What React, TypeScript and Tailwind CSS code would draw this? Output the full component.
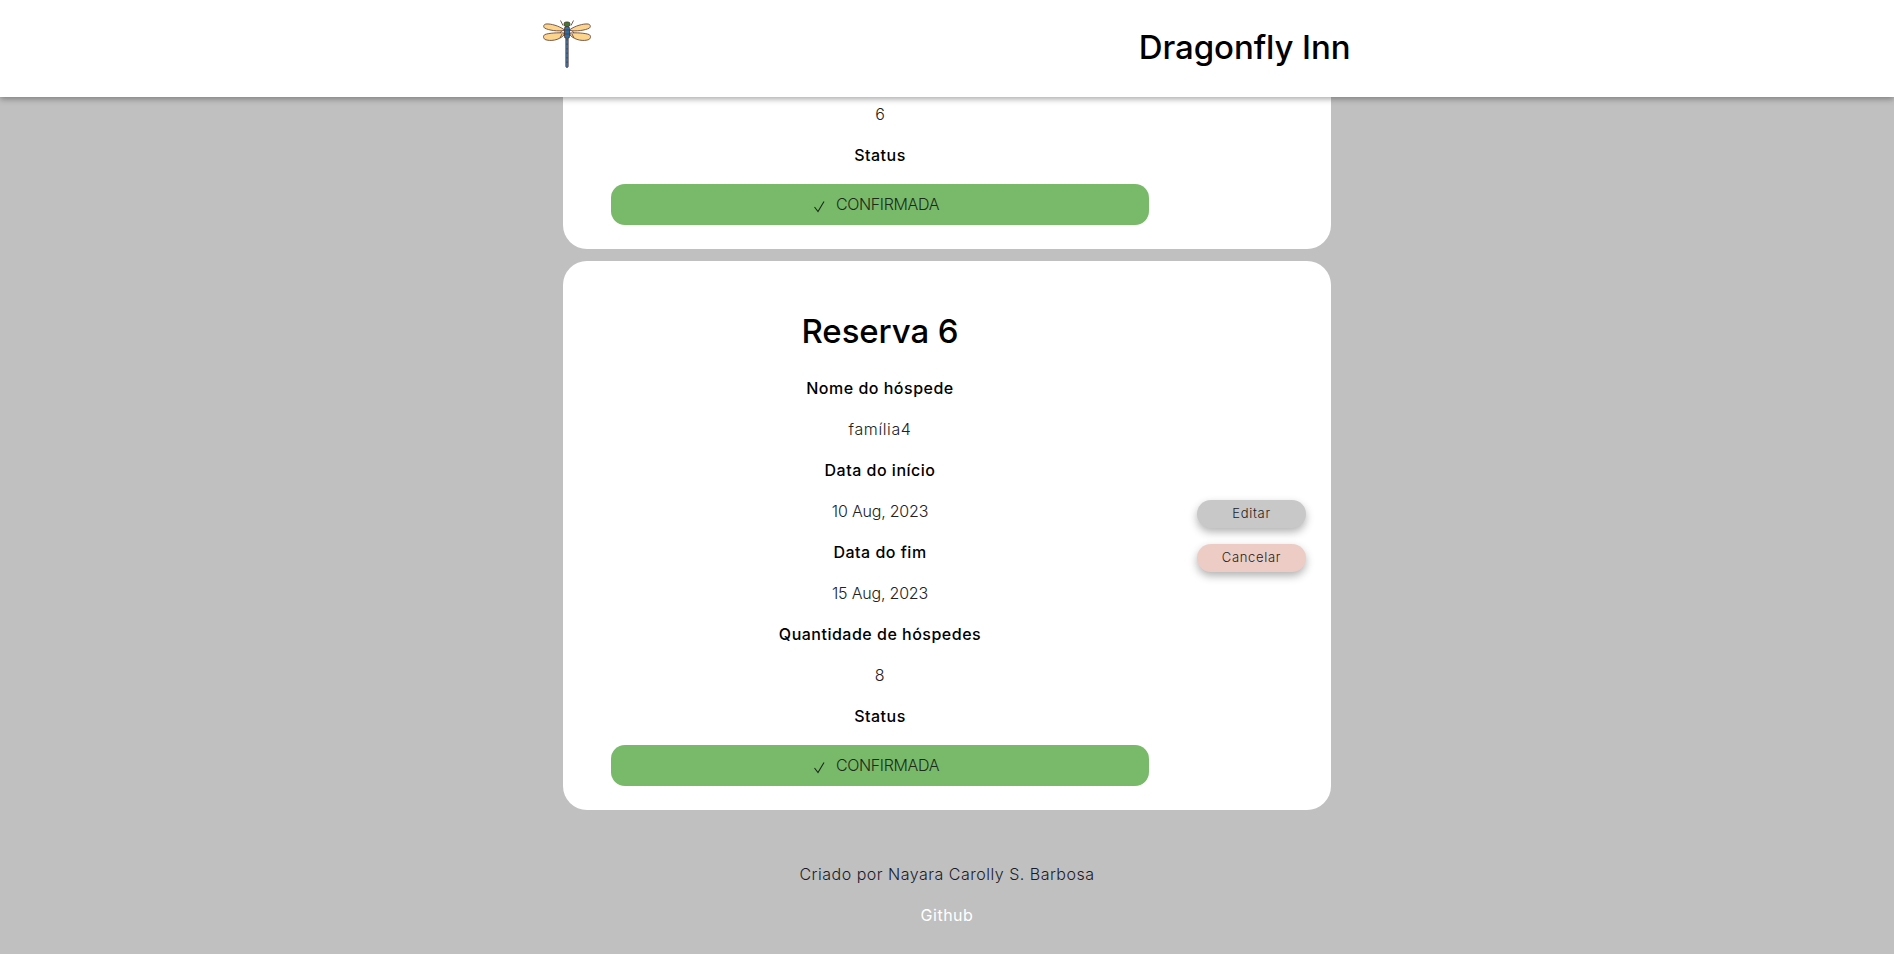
const font = { fontFamily: "Inter, sans-serif" };

const Dragonfly = () => (
  <svg width="48" height="48" viewBox="0 0 48 48" className="-ml-px">
    <g fill="#fdd48c" stroke="#6a4a3c" strokeWidth="0.9">
      <path d="M21 9.500C16 6 8 3.500 3 4C0.500 4.500 0 6.500 1.500 8C6 10.500 15 11.500 21 10.500Z" />
      <path d="M27 9.500C32 6 40 3.500 45 4C47.500 4.500 48 6.500 46.500 8C42 10.500 33 11.500 27 10.500Z" />
      <path d="M21 13C15 12.500 6 13 2 14.500C0 15.500 0 18 2 19.500C7 21.500 16 20.500 21 15Z" />
      <path d="M27 13C33 12.500 42 13 46 14.500C48 15.500 48 18 46 19.500C41 21.500 32 20.500 27 15Z" />
    </g>
    <path d="M17.500 0.500L20 5.500M30.500 0.500L28 5.500M19 10.500L17 13M29 10.500L31 13M19 14L17 18M29 14L31 18" stroke="#6a4a3c" strokeWidth="0.9" fill="none" />
    <rect x="21" y="2" width="6" height="4.500" rx="2" fill="#3f7a2c" stroke="#4e342e" strokeWidth="0.8" />
    <rect x="21.500" y="6.500" width="5" height="12" rx="2" fill="#2f6ea5" stroke="#4e342e" strokeWidth="0.9" />
    <path d="M21.500 10H26.500M21.500 14H26.500" stroke="#4e342e" strokeWidth="0.7" />
    <rect x="22.800" y="18" width="2.400" height="29.500" rx="1.200" fill="#3a78ad" stroke="#5d4037" strokeWidth="0.8" />
    <path d="M24 19V46" stroke="#3b3b4a" strokeWidth="0.8" strokeDasharray="1.500 3" />
  </svg>
);

const Check = () => (
  <svg width="13" height="13" viewBox="0 0 13 13" fill="none" stroke="#1a2a1a" strokeWidth="1.100" className="mt-1">
    <path d="M1.500 7L5 11.500L11 1.500" />
  </svg>
);

const StatusBar = () => (
  <div className="flex h-[41px] w-full items-center justify-center gap-[10px] rounded-[14px] bg-[#78b96a] pr-[8px] pb-px text-[16px] font-light tracking-[-0.35px] text-[#1c2b1a]">
    <Check />
    <span>CONFIRMADA</span>
  </div>
);

const Label = ({ children }: { children: string }) => (
  <p className="h-[41px] text-[16px] leading-[41px] font-medium tracking-[0.5px] text-black">{children}</p>
);

const Value = ({ children, date }: { children: string; date?: boolean }) => (
  <p className={date ? "h-[41px] text-[16px] leading-[41px] font-light tracking-[-0.2px] text-[#222]" : "h-[41px] text-[16px] leading-[41px] font-light tracking-[0.6px] text-[#222]"}>
    {children}
  </p>
);

export default function App() {
  return (
    <div style={font} className="flex h-screen flex-col overflow-hidden bg-[#c0c0c0]">
      <header className="relative z-10 flex h-[97px] shrink-0 justify-center bg-white shadow-[0_2px_6px_rgba(0,0,0,0.35)]">
        <div className="flex w-[807px] justify-between pt-[20px]">
          <Dragonfly />
          <h1 className="pt-[3px] text-[33px] leading-[48px] font-medium tracking-[-0.1px] text-black">Dragonfly Inn</h1>
        </div>
      </header>

      <main className="mx-auto flex w-[768px] shrink-0 flex-col gap-3">
        <section className="rounded-b-[24px] bg-white pr-[182px] pb-6 pl-12 text-center">
          <p className="h-[35px] pt-[3px] text-[16px] leading-[28px] font-light text-[#222]">6</p>
          <div className="h-[52px] pt-[3px]">
            <Label>Status</Label>
          </div>
          <StatusBar />
        </section>

        <section className="flex rounded-[24px] bg-white pr-[25px] pb-6 pl-12">
          <div className="w-[538px] text-center">
            <h2 className="h-[107px] pt-[44px] text-[33px] leading-[52px] font-medium tracking-[-0.1px] text-black">Reserva 6</h2>
            <Label>Nome do hóspede</Label>
            <Value>família4</Value>
            <Label>Data do início</Label>
            <Value date>10 Aug, 2023</Value>
            <Label>Data do fim</Label>
            <Value date>15 Aug, 2023</Value>
            <Label>Quantidade de hóspedes</Label>
            <Value>8</Value>
            <div className="mb-[8px]">
              <Label>Status</Label>
            </div>
            <StatusBar />
          </div>
          <div className="ml-auto flex flex-col justify-center gap-4 pt-[24px]">
            <button className="h-[28px] w-[109px] rounded-[14px] bg-[#c8c8c8] text-[13px] font-light tracking-[0.7px] text-[#222] shadow-[0_4px_8px_rgba(0,0,0,0.3)]">Editar</button>
            <button className="h-[28px] w-[109px] rounded-[14px] bg-[#eeccc6] text-[13px] font-light tracking-[0.7px] text-[#222] shadow-[0_4px_8px_rgba(0,0,0,0.3)]">Cancelar</button>
          </div>
        </section>
      </main>

      <footer className="pt-[44px] text-center text-[16px]">
        <p className="h-[41px] leading-[41px] font-light tracking-[0.5px] text-[#1a1a2a]">Criado por Nayara Carolly S. Barbosa</p>
        <a className="block h-[41px] leading-[41px] font-normal tracking-[0.5px] text-white">Github</a>
      </footer>
    </div>
  );
}
